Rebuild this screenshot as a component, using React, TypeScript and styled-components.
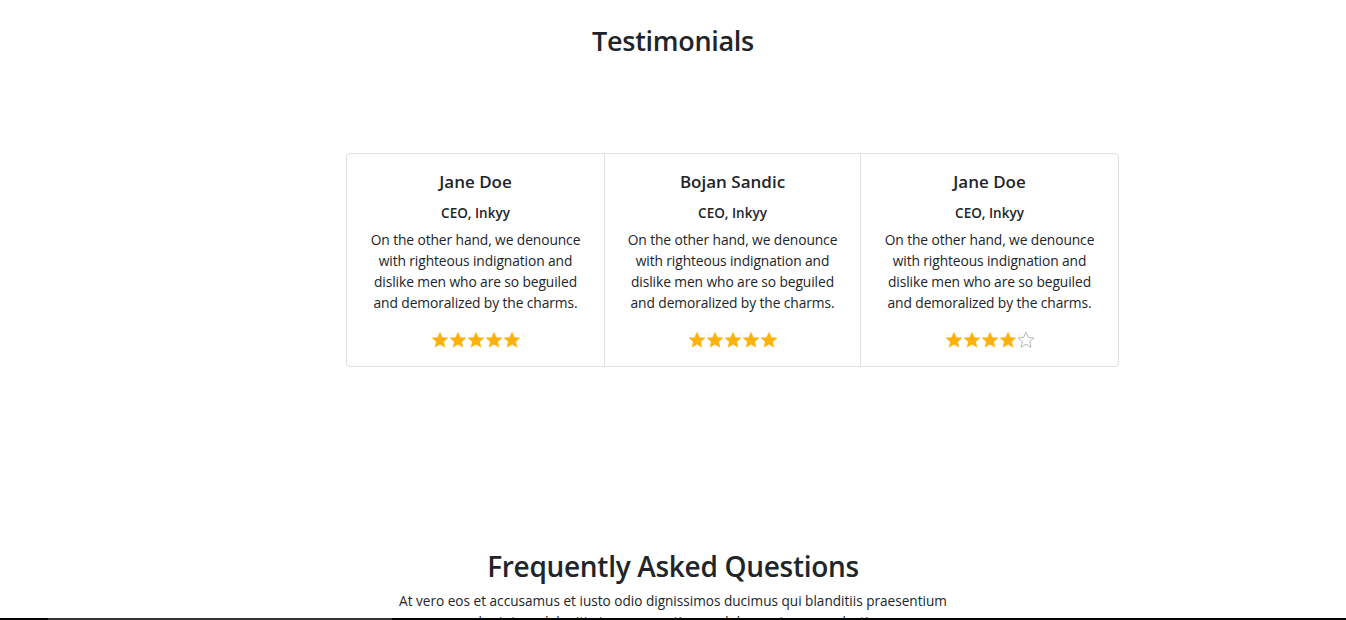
import React from "react";
import styled, { createGlobalStyle } from "styled-components";

const Global = createGlobalStyle`
  html, body { margin: 0; padding: 0; background: #fff; }
  body {
    font-family: "Open Sans", "Noto Sans", sans-serif;
    color: #212529;
    overflow: hidden;
  }
  * { box-sizing: border-box; }
`;

const Page = styled.div`
  display: flex;
  flex-direction: column;
  align-items: center;
`;

const SectionTitle = styled.h2<{ $size: number }>`
  margin: 0;
  font-weight: 600;
  font-size: ${(p) => p.$size}px;
  line-height: 1.2;
  letter-spacing: -0.3px;
  text-align: center;
`;

const Testimonials = styled.section`
  width: 100%;
  display: flex;
  flex-direction: column;
  align-items: center;
  padding-top: 25px;
`;

const CardGroup = styled.div`
  display: flex;
  margin-top: 96px;
  margin-left: 119px;
`;

const Card = styled.div<{ $pos: "first" | "mid" | "last" }>`
  width: ${(p) => (p.$pos === "first" ? 259 : p.$pos === "mid" ? 257 : 259)}px;
  height: 214px;
  border: 1px solid #dfdfdf;
  margin-left: ${(p) => (p.$pos === "first" ? 0 : -1)}px;
  border-radius: ${(p) =>
    p.$pos === "first" ? "4px 0 0 4px" : p.$pos === "last" ? "0 4px 4px 0" : "0"};
  display: flex;
  flex-direction: column;
  align-items: center;
  padding: 16px 20px 0;
  text-align: center;
`;

const Name = styled.h5`
  margin: 0;
  font-size: 17px;
  font-weight: 600;
  line-height: 24px;
`;

const Role = styled.h6`
  margin: 10px 0 0;
  font-size: 13.5px;
  font-weight: 600;
  line-height: 18px;
`;

const Quote = styled.p`
  margin: 7px 0 0;
  font-size: 13.8px;
  line-height: 21px;
  letter-spacing: -0.1px;
`;

const Stars = styled.div`
  display: flex;
  margin-top: 18px;
`;

const StarSvg = styled.svg`
  width: 18px;
  height: 18px;
  display: block;
`;

const Star = ({ filled }: { filled: boolean }) => (
  <StarSvg viewBox="0 0 24 24">
    <path
      d="M12 1.6l3.1 6.9 7.5.7-5.7 5 1.7 7.4L12 17.7l-6.6 3.9 1.7-7.4-5.7-5 7.5-.7z"
      fill={filled ? "#fdb10b" : "#fff"}
      stroke={filled ? "#fdb10b" : "#b5b5b5"}
      strokeWidth={filled ? 0.6 : 1.3}
      strokeLinejoin="round"
    />
  </StarSvg>
);

const Faq = styled.section`
  display: flex;
  flex-direction: column;
  align-items: center;
  margin-top: 183px;
`;

const FaqText = styled.p`
  margin: 6px 0 0;
  width: 580px;
  font-size: 13.6px;
  line-height: 21px;
  text-align: center;
`;

const BottomBar = styled.div`
  position: fixed;
  left: 0;
  right: 0;
  bottom: 0;
  height: 2px;
  background: linear-gradient(to right, #000 0 48px, #333 48px 392px, #000 392px);
`;

const data = [
  { name: "Jane Doe", rating: 5 },
  { name: "Bojan Sandic", rating: 5 },
  { name: "Jane Doe", rating: 4 },
];

export default function App() {
  return (
    <Page>
      <Global />
      <Testimonials>
        <SectionTitle $size={27}>Testimonials</SectionTitle>
        <CardGroup>
          {data.map((d, i) => (
            <Card key={i} $pos={i === 0 ? "first" : i === 2 ? "last" : "mid"}>
              <Name>{d.name}</Name>
              <Role>CEO, Inkyy</Role>
              <Quote>
                On the other hand, we denounce with righteous indignation and dislike men who
                are so beguiled and demoralized by the charms.
              </Quote>
              <Stars>
                {[0, 1, 2, 3, 4].map((s) => (
                  <Star key={s} filled={s < d.rating} />
                ))}
              </Stars>
            </Card>
          ))}
        </CardGroup>
      </Testimonials>
      <Faq>
        <SectionTitle $size={28}>Frequently Asked Questions</SectionTitle>
        <FaqText>
          At vero eos et accusamus et iusto odio dignissimos ducimus qui blanditiis praesentium
          voluptatum deleniti atque corrupti quos dolores et quas molestias
        </FaqText>
      </Faq>
      <BottomBar />
    </Page>
  );
}
